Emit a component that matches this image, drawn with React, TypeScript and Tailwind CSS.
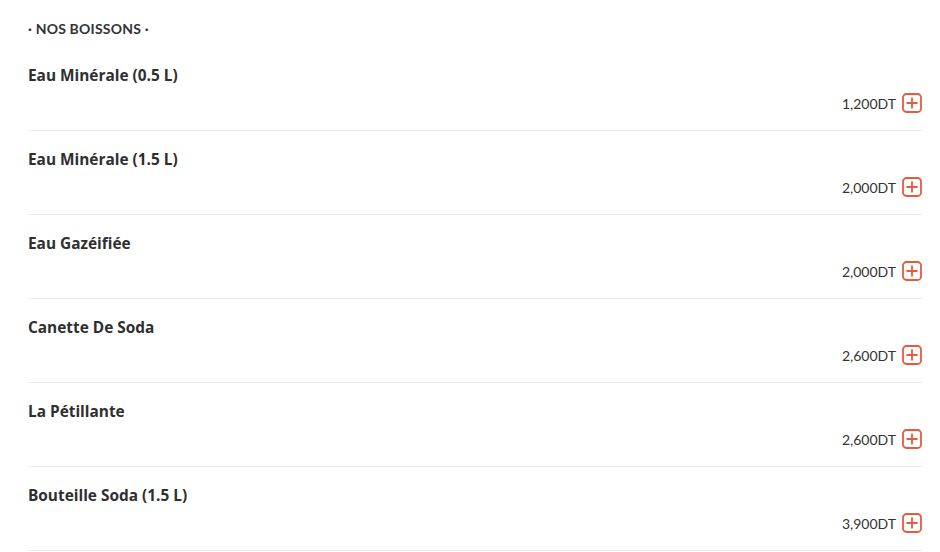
const drinks = [
  { name: "Eau Minérale (0.5 L)", price: "1,200DT" },
  { name: "Eau Minérale (1.5 L)", price: "2,000DT" },
  { name: "Eau Gazéifiée", price: "2,000DT" },
  { name: "Canette De Soda", price: "2,600DT" },
  { name: "La Pétillante", price: "2,600DT" },
  { name: "Bouteille Soda (1.5 L)", price: "3,900DT" },
];

const PlusBox = () => (
  <svg width="20" height="20" viewBox="0 0 20 20" fill="none" className="shrink-0">
    <rect x="1" y="1" width="18" height="18" rx="3.5" stroke="#e85a3a" strokeWidth="1.8" />
    <path d="M10 4.5v11M4.5 10h11" stroke="#e85a3a" strokeWidth="1.8" />
  </svg>
);

const App = () => {
  return (
    <div className="min-h-[552px] bg-white pl-[28px] pr-[17px] font-['Lato','Noto_Sans',sans-serif] text-[#333]">
      {/* Section title */}
      <h2 className="pt-[19px] text-[14px] font-bold leading-[20px] uppercase mb-[8px] tracking-[0.2px]">
        · Nos Boissons ·
      </h2>

      {/* Items */}
      <ul>
        {drinks.map(d => (
          <li key={d.name} className="border-b border-[#ebebeb] pt-[19px] pb-[17px]">
            <div className="font-['Open_Sans',sans-serif] text-[15.4px] font-bold leading-[19px] text-[#2f2f2f]">
              {d.name}
            </div>
            <div className="mt-[8px] flex h-[20px] items-center justify-end gap-[6px] pr-[1px]">
              <span className="text-[14px] text-[#333]">{d.price}</span>
              <PlusBox />
            </div>
          </li>
        ))}
      </ul>
    </div>
  );
};

export default App;
